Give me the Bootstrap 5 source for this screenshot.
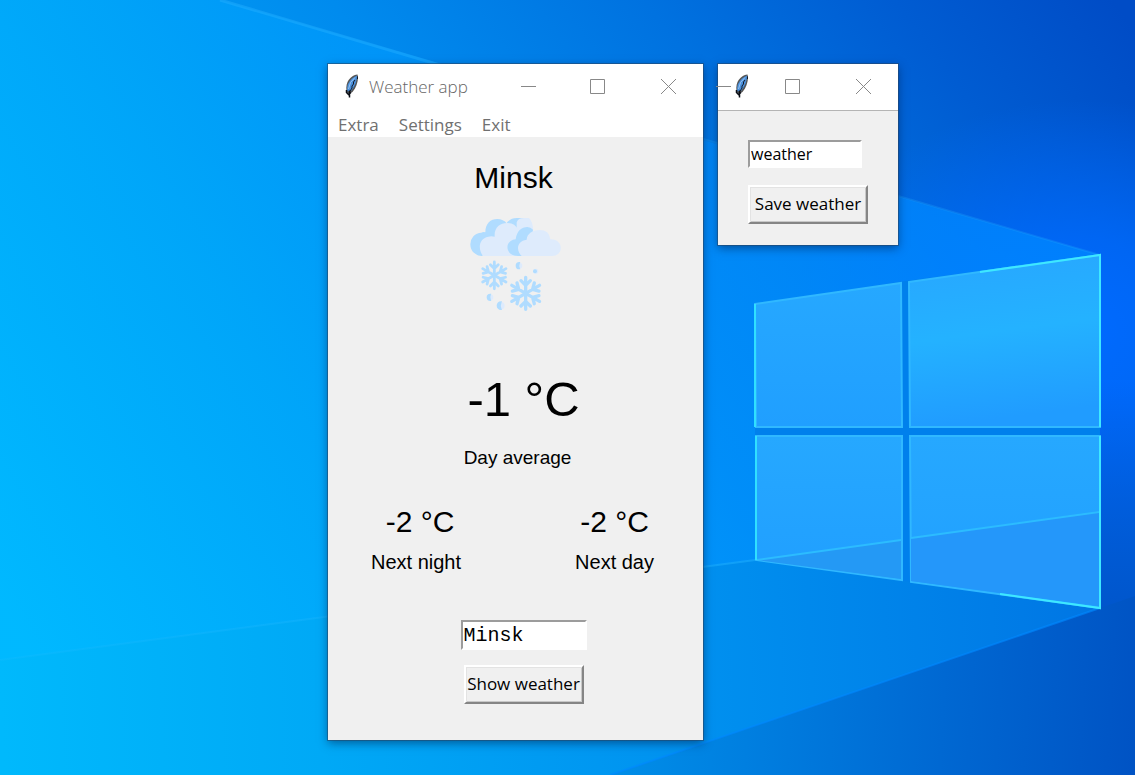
<!DOCTYPE html>
<html lang="en">
<head>
<meta charset="utf-8">
<meta name="viewport" content="width=device-width, initial-scale=1">
<title>Weather app</title>
<link href="https://cdn.jsdelivr.net/npm/bootstrap@5.3.0/dist/css/bootstrap.min.css" rel="stylesheet">
<style>
  body { font-family: "Open Sans", sans-serif; background: #0090f4; color: #000; }
  .wallpaper { z-index: 0; }
  .app-window { position: absolute; top: 64px; background: #f0f0f0; box-shadow: 0 0 0 1px rgba(40,70,100,.55), 0 3px 9px rgba(0,20,60,.5); }
  .win-weather { left: 328px; width: 375px; }
  .win-save { left: 718px; width: 180px; }
  .title-bar { height: 46px; background: #fff; }
  .title-text { font-size: 17px; font-weight: 300; line-height: 46px; color: #666; }
  .feather { width: 14px; height: 24px; }
  .feather-start { margin: 10px 10px 0 17px; }
  .feather-over { position: absolute; left: 17px; top: 10px; }
  .win-btn { flex: 0 0 70px; height: 46px; padding: 0; border: 0; background: none; color: #888; display: flex; align-items: center; justify-content: center; }
  .win-btn svg { width: 16px; height: 16px; overflow: visible; }
  .menu-row { height: 27px; padding: 0 10px; gap: 20px; background: #fff; }
  .menu-row a { font-size: 17px; line-height: 30px; color: #707070; text-decoration: none; }
  .panel { font-family: "Liberation Sans", Arial, sans-serif; padding: 23px 0 36px; }
  .t-large { font-size: 49px; line-height: 56px; margin-bottom: 17px; }
  .t-medium { font-size: 30px; line-height: 36px; }
  .t-label { font-size: 19px; line-height: 28px; }
  .t-next { font-size: 20px; line-height: 28px; }
  .snow-icon { width: 94px; height: 94px; margin: 21px 0 60px; }
  .forecast { padding: 0 49px 0 43px; margin: 32px 0 44px; }
  .tk-entry { padding: 0 1px; border: 2px solid; border-color: #9c9c9c #fff #fff #9c9c9c; background: #fff; color: #000; outline: 0; }
  .entry-city { width: 126px; height: 30px; font: 20px "Liberation Mono", monospace; margin-bottom: 15px; }
  .entry-file { width: 114px; height: 28px; font: 16px "Open Sans", sans-serif; margin-bottom: 17px; }
  .tk-button { width: 120px; height: 39px; padding: 0 0 2px; font: 17px "Open Sans", sans-serif; color: #000; white-space: nowrap; background: #f0f0f0; border: 2px solid; border-color: #fff #858585 #858585 #fff; box-shadow: inset 1px 1px #e3e3e3, inset -1px -1px #c8c8c8; }
  .save-panel { border-top: 1px solid #b4b4b4; padding: 29px 30px 21px; }
</style>
</head>
<body>
<main class="position-relative vh-100 overflow-hidden">
  <svg class="wallpaper position-absolute top-0 start-0 w-100 h-100" viewBox="0 0 1135 775" preserveAspectRatio="xMidYMid slice" aria-hidden="true">
    <defs>
      <linearGradient id="sky" gradientUnits="userSpaceOnUse" x1="0" y1="600" x2="1000" y2="-150"><stop offset="0" stop-color="#00b8ff"/><stop offset=".28" stop-color="#00a3f6"/><stop offset=".5" stop-color="#008bee"/><stop offset=".7" stop-color="#0072e0"/><stop offset=".86" stop-color="#005cd2"/><stop offset="1" stop-color="#004cc6"/></linearGradient>
      <linearGradient id="upperRay" gradientUnits="userSpaceOnUse" x1="0" y1="600" x2="900" y2="150"><stop offset="0" stop-color="#00b9ff"/><stop offset=".35" stop-color="#00a6fa"/><stop offset=".7" stop-color="#0090fc"/><stop offset="1" stop-color="#0088ff"/></linearGradient>
      <linearGradient id="lowerRay" gradientUnits="userSpaceOnUse" x1="0" y1="700" x2="1100" y2="660"><stop offset="0" stop-color="#00b9fc"/><stop offset=".29" stop-color="#00a9f6"/><stop offset=".64" stop-color="#0090ef"/><stop offset="1" stop-color="#0076e4"/></linearGradient>
      <linearGradient id="ground" gradientUnits="userSpaceOnUse" x1="580" y1="730" x2="1135" y2="760"><stop offset="0" stop-color="#0092ea"/><stop offset=".3" stop-color="#007fe0"/><stop offset=".65" stop-color="#0068d2"/><stop offset="1" stop-color="#0053c4"/></linearGradient>
      <radialGradient id="rightGlow" gradientUnits="userSpaceOnUse" cx="0" cy="0" r="1" gradientTransform="translate(1080 330) scale(290 230)"><stop offset="0" stop-color="#006aff"/><stop offset=".4" stop-color="#006aff" stop-opacity=".75"/><stop offset="1" stop-color="#006aff" stop-opacity="0"/></radialGradient>
      <linearGradient id="edge" gradientUnits="userSpaceOnUse" x1="0" y1="380" x2="0" y2="610"><stop offset="0" stop-color="#0054c8" stop-opacity="0"/><stop offset="1" stop-color="#0056cc"/></linearGradient>
      <linearGradient id="pane" x1="0" y1="0" x2="0" y2="1"><stop offset="0" stop-color="#26a8ff"/><stop offset="1" stop-color="#209fff"/></linearGradient>
      <linearGradient id="paneHot" x1="0" y1="0" x2=".15" y2="1"><stop offset="0" stop-color="#28a6ff"/><stop offset=".5" stop-color="#24b2ff"/><stop offset="1" stop-color="#209cff"/></linearGradient>
      <linearGradient id="beam" gradientUnits="userSpaceOnUse" x1="0" y1="0" x2="755" y2="0"><stop offset="0" stop-color="#20bcff" stop-opacity=".4"/><stop offset="1" stop-color="#20b0ff"/></linearGradient>
    </defs>
    <rect width="1135" height="775" fill="url(#sky)"/>
    <path d="M1098 380H1135V775H1098z" fill="#0066ee"/>
    <rect x="780" y="100" width="355" height="460" fill="url(#rightGlow)"/>
    <path d="M1098 380H1135V775H1098z" fill="url(#edge)"/>
    <path d="M0 0H220L1100 255 755 560 0 660z" fill="url(#upperRay)" opacity=".75"/>
    <path d="M0 660 755 560 1100 608 610 775H0z" fill="url(#lowerRay)"/>
    <path d="M1100 608 1135 596V775H610z" fill="url(#ground)"/>
    <g fill="none" stroke="#24b0ff">
      <path d="M220 0 450 68" stroke-width="3" opacity=".45"/>
      <path d="M700 138 1100 255" stroke-width="2" opacity=".25"/>
      <path d="M0 660 755 560" stroke="url(#beam)" stroke-width="2" opacity=".5"/>
      <path d="M1100 608 610 775" stroke="#0088ff" stroke-width="2" opacity=".6"/>
    </g>
    <path d="M755 304 905 281 1100 255 1100 608 905 581 755 560z" fill="#0080ec"/>
    <g stroke="#30b8ff" stroke-width="2">
      <path d="M755 304 901 283 902 427 756 427z" fill="url(#pane)"/>
      <path d="M909 282 1100 255 1100 427 910 427z" fill="url(#paneHot)"/>
      <path d="M756 436 902 436 902 580 756 560z" fill="url(#pane)"/>
      <path d="M910 436 1100 436 1100 608 911 582z" fill="url(#pane)"/>
    </g>
    <path d="M757 560 901 540 901 579z" fill="#2499f5"/>
    <path d="M911 538 1099 511 1099 606 911 581z" fill="#2497fa"/>
    <g fill="none" stroke="#2cbcff" stroke-width="2">
      <path d="M757 560 901 540M911 538 1099 512"/>
      <path d="M755 304V427M756 436V560" stroke="#30e0ff"/>
      <path d="M980 272 1100 255V427M1100 436V608L1000 594" stroke="#3ee8ff"/>
    </g>
  </svg>

  <section class="app-window win-weather" aria-label="Weather app">
    <header class="title-bar d-flex">
      <svg class="feather feather-start flex-shrink-0" viewBox="0 0 14 24" aria-hidden="true"><use href="#feather"/></svg>
      <span class="title-text flex-grow-1 text-nowrap">Weather app</span>
      <button class="win-btn" type="button" aria-label="Minimize"><svg viewBox="0 0 16 16"><path d="M1 7.500H16" stroke="currentColor"/></svg></button>
      <button class="win-btn" type="button" aria-label="Maximize"><svg viewBox="0 0 16 16"><path d="M.5.500h14v14h-14z" fill="none" stroke="currentColor"/></svg></button>
      <button class="win-btn" type="button" aria-label="Close"><svg viewBox="0 0 16 16"><path d="M1 0 16 15M16 0 1 15" stroke="currentColor"/></svg></button>
    </header>
    <nav class="menu-row d-flex" aria-label="Menu"><a href="#">Extra</a><a href="#">Settings</a><a href="#">Exit</a></nav>
    <div class="panel d-flex flex-column align-items-center">
      <div class="t-medium me-1">Minsk</div>
      <svg class="snow-icon" viewBox="57 36 282 282" role="img" aria-label="Snow">
        <defs>
          <g id="flake" fill="none" stroke="#b0dcff" stroke-width="10" stroke-linecap="round">
            <g id="arm"><path d="M0 0V-48M0-24-14-38M0-24 14-38"/></g>
            <use href="#arm" transform="rotate(60)"/><use href="#arm" transform="rotate(120)"/><use href="#arm" transform="rotate(180)"/><use href="#arm" transform="rotate(240)"/><use href="#arm" transform="rotate(300)"/>
          </g>
        </defs>
        <path d="M168 56Q180 39 200 39H236L240 80 180 90z" fill="#b0dcff"/>
        <path d="M200 52Q204 39 222 39H237Q250 50 250 82L200 100z" fill="#deebfc"/>
        <path d="M96 153A34 35 0 0 1 94 83Q99 80 106 82C106 55 122 42 142 42Q160 42 171 56L150 110z" fill="#b0dcff"/>
        <path d="M100 153C84 136 84 101 115 95Q124 92 134 95C132 68 150 54 171 54Q195 54 204 74L212 153z" fill="#deebfc"/>
        <path d="M204 153C164 152 162 106 197 103 200 78 215 66 232 66Q242 66 249 74L239 153z" fill="#b0dcff"/>
        <path d="M215 153C198 137 199 108 230 104 231 86 248 75 269 75Q298 75 301 103C342 102 342 153 306 153z" fill="#deebfc"/>
        <use href="#flake" transform="translate(133 211) scale(.84)"/>
        <use href="#flake" transform="translate(227 265)"/>
        <g fill="#deebfc"><circle cx="208" cy="182" r="9"/><circle cx="257" cy="199" r="8"/><circle cx="121" cy="277" r="9"/><circle cx="153" cy="302" r="11"/></g>
        <g fill="#b0dcff"><path d="M208 173a9 9 0 0 0 0 18q-4-9 0-18z" stroke="#b0dcff" stroke-width="4"/><circle cx="255" cy="199" r="6"/><path d="M121 268a9 9 0 0 0 0 18q-4-9 0-18z" stroke="#b0dcff" stroke-width="4"/><path d="M153 291a11 11 0 0 0 0 22q-5-11 0-22z" stroke="#b0dcff" stroke-width="4"/></g>
      </svg>
      <div class="t-large ms-3">-1 °C</div>
      <div class="t-label ms-1">Day average</div>
      <div class="forecast d-flex justify-content-between align-self-stretch text-center">
        <div><div class="t-medium mb-2 ps-2">-2 °C</div><div class="t-next">Next night</div></div>
        <div><div class="t-medium mb-2">-2 °C</div><div class="t-next">Next day</div></div>
      </div>
      <form class="d-flex flex-column align-items-center ms-3" onsubmit="return false">
        <input class="tk-entry entry-city" type="text" value="Minsk" aria-label="City">
        <button class="tk-button" type="submit">Show weather</button>
      </form>
    </div>
  </section>

  <section class="app-window win-save" aria-label="Save weather">
    <header class="title-bar d-flex justify-content-end">
      <button class="win-btn" type="button" aria-label="Minimize"><svg viewBox="0 0 16 16"><path d="M1 7.500H16" stroke="currentColor"/></svg></button>
      <button class="win-btn" type="button" aria-label="Maximize"><svg viewBox="0 0 16 16"><path d="M.5.500h14v14h-14z" fill="none" stroke="currentColor"/></svg></button>
      <button class="win-btn" type="button" aria-label="Close"><svg viewBox="0 0 16 16"><path d="M1 0 16 15M16 0 1 15" stroke="currentColor"/></svg></button>
      <svg class="feather feather-over" viewBox="0 0 14 24" aria-hidden="true">
        <g id="feather">
          <path d="M12.500.5C8 1 4.500 4 2.500 8 1 12 1 15 2 18.500L4 20 7.500 18C11 14 13 8 13 3z" fill="#555"/>
          <path d="M12 1.500C8 3 5 6 3 10 2 13 2 15 2.500 17.500L6.500 16.500C10 12 12 7 12 1.500z" fill="#4a90dc"/>
          <path d="M10 3.500 5.500 8.500 3.500 15" fill="none" stroke="#9ac3ee"/>
          <path d="M10 6 8.500 8v2L7 12v2L4.500 18M12.500 2.500 12.500 5" fill="none" stroke="#101828"/>
          <path d="M4.500 16.500V23.500M1.500 16v2.500l2 2 2.500-2" fill="none" stroke="#080c14" stroke-width="1.500"/>
        </g>
      </svg>
    </header>
    <form class="save-panel d-flex flex-column align-items-start" onsubmit="return false">
      <input class="tk-entry entry-file" type="text" value="weather" aria-label="File name">
      <button class="tk-button" type="submit">Save weather</button>
    </form>
  </section>
</main>
<script src="https://cdn.jsdelivr.net/npm/bootstrap@5.3.0/dist/js/bootstrap.bundle.min.js"></script>
</body>
</html>
